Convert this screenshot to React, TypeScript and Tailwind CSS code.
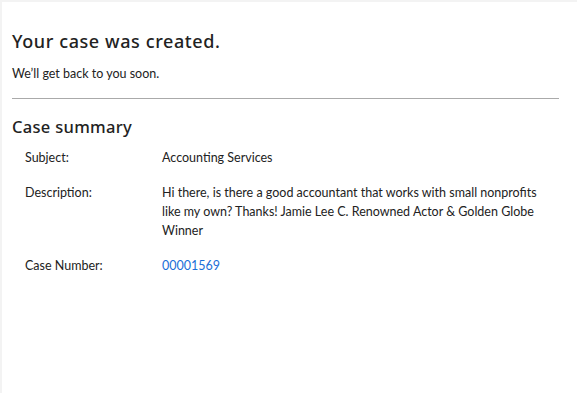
import React from "react";

export default function App() {
  const body = { fontFamily: "Lato, 'Noto Sans', sans-serif" };
  return (
    <div className="min-h-[393px] bg-[#f3f3f3] pl-[2px] pt-[2px]">
      <div className="min-h-[391px] bg-white pl-[10px] pr-[18px] pt-[26px]" style={body}>
        <h1 className="text-[18px] leading-[26px] font-medium text-[#222] tracking-[0.6px]" style={{ fontFamily: "'Noto Sans', sans-serif" }}>
          Your case was created.
        </h1>
        <p className="mt-[11px] text-[12.5px] leading-[18px] text-[#222]">We’ll get back to you soon.</p>
        <div className="mt-[15px] h-px bg-[#aaaaaa]" />
        <h2 className="mt-[17px] text-[16.5px] leading-[22px] font-medium text-[#222] tracking-[0.3px]" style={{ fontFamily: "'Noto Sans', sans-serif" }}>
          Case summary
        </h2>
        <div className="mt-[10px] flex flex-col gap-[16px] pl-[13px] text-[12.5px] leading-[19px] text-[#222]">
          <div className="flex">
            <div className="w-[137px] shrink-0">Subject:</div>
            <div>Accounting Services</div>
          </div>
          <div className="flex">
            <div className="w-[137px] shrink-0">Description:</div>
            <div className="max-w-[380px]">
              Hi there, is there a good accountant that works with small nonprofits like my own? Thanks! Jamie Lee C. Renowned Actor &amp; Golden Globe Winner
            </div>
          </div>
          <div className="flex">
            <div className="w-[137px] shrink-0">Case Number:</div>
            <div className="text-[#1a6fd8]">00001569</div>
          </div>
        </div>
      </div>
    </div>
  );
}
